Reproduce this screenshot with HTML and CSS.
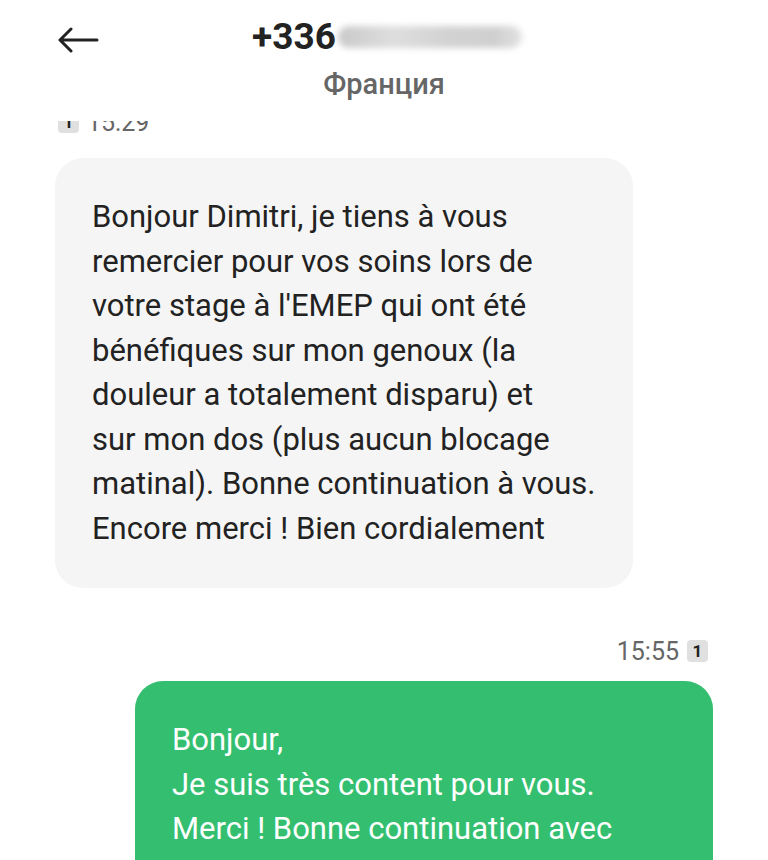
FILE: index.html
```html
<!DOCTYPE html>
<html lang="fr">
  <head>
    <meta charset="UTF-8" />
    <meta name="viewport" content="width=device-width, initial-scale=1.0" />
    <title>+336 - Messages</title>
    <link rel="stylesheet" href="styles.css">
  </head>
  <body>
    <header class="topbar">
      <a class="back" href="#" aria-label="Retour">
        <svg width="42" height="26" viewBox="0 0 42 26">
          <path d="M40 13H3M14 2L3 13l11 11" fill="none" stroke="#222" stroke-width="3" stroke-linecap="round" stroke-linejoin="round" />
        </svg>
      </a>
      <div class="contact">
        <div class="number">+336<span class="masked"></span></div>
        <div class="country">Франция</div>
      </div>
    </header>
    <main class="thread">
      <div class="stamp in clipped">
        <span class="sim">1</span>
        <span class="time">15:29</span>
      </div>
      <div class="bubble incoming first">
        Bonjour Dimitri, je tiens à vous<br>remercier pour vos soins lors de<br>votre stage à l'EMEP qui ont été<br>bénéfiques sur mon genoux (la<br>douleur a totalement disparu) et<br>sur mon dos (plus aucun blocage<br>matinal). Bonne continuation à vous.<br>Encore merci ! Bien cordialement
      </div>
      <div class="stamp out">
        <span class="time">15:55</span>
        <span class="sim">1</span>
      </div>
      <div class="bubble outgoing">
        Bonjour,<br>Je suis très content pour vous.<br>Merci ! Bonne continuation avec<br>vos stages et à bientôt peut-être.
      </div>
    </main>
  </body>
</html>
```

FILE: styles.css
```css
* {
  box-sizing: border-box;
  margin: 0;
  padding: 0;
}
body {
  font-family: Roboto, "Noto Sans", sans-serif;
  background: #fff;
  color: #222;
  width: 768px;
  height: 860px;
  overflow: hidden;
}
.topbar {
  height: 121px;
  display: grid;
  grid-template-columns: 1fr auto 1fr;
  align-items: start;
  background: #fff;
}
.back {
  display: flex;
  padding: 27px 0 0 57px;
}
.contact {
  display: flex;
  flex-direction: column;
  align-items: center;
  padding-top: 16px;
}
.number {
  display: flex;
  align-items: center;
  font-size: 37px;
  font-weight: 700;
  line-height: 42px;
  color: #222;
  padding-left: 6px;
}
.masked {
  display: inline-block;
  width: 184px;
  height: 22px;
  margin-left: 2px;
  border-radius: 11px;
  background: linear-gradient(90deg, #c9c9c9, #dedede 30%, #d2d2d2 60%, #cfcfcf 85%, #e2e2e2);
  filter: blur(3px);
}
.country {
  font-size: 29px;
  font-weight: 500;
  color: #666;
  line-height: 32px;
  margin-top: 10px;
}
.thread {
  height: 739px;
  overflow: hidden;
  display: flex;
  flex-direction: column;
  padding: 0 55px;
}
.stamp {
  display: flex;
  align-items: center;
  gap: 8px;
  height: 28px;
  font-size: 25px;
  color: #666;
}
.stamp.clipped {
  margin-top: -13px;
}
.stamp.in {
  justify-content: flex-start;
  padding-left: 3px;
}
.stamp.out {
  justify-content: flex-end;
  margin-top: 49px;
  padding-right: 5px;
}
.sim {
  display: inline-flex;
  align-items: center;
  justify-content: center;
  width: 21px;
  height: 22px;
  border-radius: 4px;
  background: #e0e0e0;
  color: #222;
  font-size: 17px;
  font-weight: 700;
}
.bubble {
  width: 578px;
  margin-top: 16px;
  padding: 37px 37px;
  border-radius: 28px;
  font-size: 31px;
  line-height: 44.5px;
  white-space: nowrap;
}
.bubble.first {
  margin-top: 22px;
}
.incoming {
  align-self: flex-start;
  background: #f5f5f5;
  color: #222;
}
.outgoing {
  align-self: flex-end;
  background: #34bf70;
  color: #fff;
}
```
